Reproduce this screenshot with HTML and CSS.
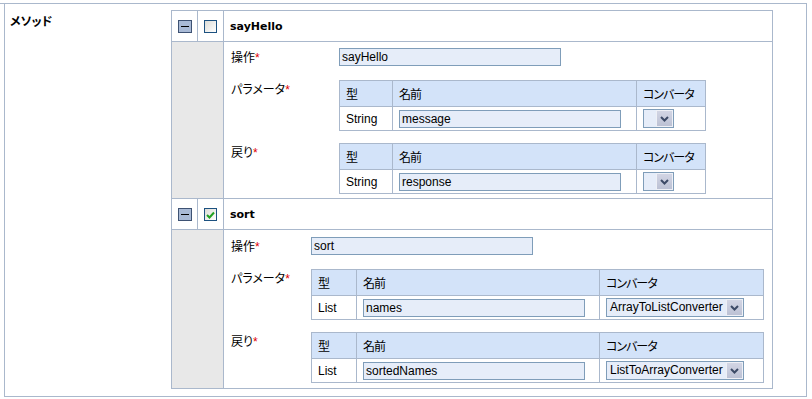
FILE: index.html
```html
<!DOCTYPE html>
<html lang="ja">
<head>
    <meta charset="UTF-8">
    <title>メソッド</title>
    <link rel="stylesheet" href="styles.css">
</head>
<body>
    <div class="page">
        <div class="form-box">
            <div class="form-label">メソッド</div>
            <div class="form-field">
                <table class="methods">
                    <tr class="method-head">
                        <td class="tool"><span class="collapse"></span></td>
                        <td class="tool"><span class="check"></span></td>
                        <td class="method-name">sayHello</td>
                    </tr>
                    <tr>
                        <td class="gutter" colspan="2"></td>
                        <td class="method-body">
                            <div class="fields fields-wide">
                                <div class="field-label">操作<span class="req">*</span></div>
                                <span class="input op-input">sayHello</span>

                                <div class="field-label">パラメータ<span class="req">*</span></div>
                                <table class="params">
                                    <tr>
                                        <th class="c-type">型</th>
                                        <th class="c-name">名前</th>
                                        <th class="c-conv">コンバータ</th>
                                    </tr>
                                    <tr>
                                        <td>String</td>
                                        <td><span class="input">message</span></td>
                                        <td>
                                            <span class="select">
                                                <span class="select-value"></span>
                                                <span class="select-btn"><svg width="9" height="6" viewBox="0 0 9 6"><path d="M1 1 L4.5 4.5 L8 1" fill="none" stroke="#3c4a66" stroke-width="2"/></svg></span>
                                            </span>
                                        </td>
                                    </tr>
                                </table>

                                <div class="field-label">戻り<span class="req">*</span></div>
                                <table class="params">
                                    <tr>
                                        <th class="c-type">型</th>
                                        <th class="c-name">名前</th>
                                        <th class="c-conv">コンバータ</th>
                                    </tr>
                                    <tr>
                                        <td>String</td>
                                        <td><span class="input">response</span></td>
                                        <td>
                                            <span class="select">
                                                <span class="select-value"></span>
                                                <span class="select-btn"><svg width="9" height="6" viewBox="0 0 9 6"><path d="M1 1 L4.5 4.5 L8 1" fill="none" stroke="#3c4a66" stroke-width="2"/></svg></span>
                                            </span>
                                        </td>
                                    </tr>
                                </table>
                            </div>
                        </td>
                    </tr>
                    <tr class="method-head">
                        <td class="tool"><span class="collapse"></span></td>
                        <td class="tool"><span class="check checked"><svg width="9" height="8" viewBox="0 0 9 8"><path d="M1 4 L3.5 6.5 L8 1.5" fill="none" stroke="#21a121" stroke-width="2"/></svg></span></td>
                        <td class="method-name">sort</td>
                    </tr>
                    <tr>
                        <td class="gutter" colspan="2"></td>
                        <td class="method-body">
                            <div class="fields fields-narrow">
                                <div class="field-label">操作<span class="req">*</span></div>
                                <span class="input op-input">sort</span>

                                <div class="field-label">パラメータ<span class="req">*</span></div>
                                <table class="params">
                                    <tr>
                                        <th class="c-type">型</th>
                                        <th class="c-name">名前</th>
                                        <th class="c-conv">コンバータ</th>
                                    </tr>
                                    <tr>
                                        <td>List</td>
                                        <td><span class="input">names</span></td>
                                        <td>
                                            <span class="select">
                                                <span class="select-value">ArrayToListConverter</span>
                                                <span class="select-btn"><svg width="9" height="6" viewBox="0 0 9 6"><path d="M1 1 L4.5 4.5 L8 1" fill="none" stroke="#3c4a66" stroke-width="2"/></svg></span>
                                            </span>
                                        </td>
                                    </tr>
                                </table>

                                <div class="field-label">戻り<span class="req">*</span></div>
                                <table class="params">
                                    <tr>
                                        <th class="c-type">型</th>
                                        <th class="c-name">名前</th>
                                        <th class="c-conv">コンバータ</th>
                                    </tr>
                                    <tr>
                                        <td>List</td>
                                        <td><span class="input">sortedNames</span></td>
                                        <td>
                                            <span class="select">
                                                <span class="select-value">ListToArrayConverter</span>
                                                <span class="select-btn"><svg width="9" height="6" viewBox="0 0 9 6"><path d="M1 1 L4.5 4.5 L8 1" fill="none" stroke="#3c4a66" stroke-width="2"/></svg></span>
                                            </span>
                                        </td>
                                    </tr>
                                </table>
                            </div>
                        </td>
                    </tr>
                </table>
            </div>
        </div>
    </div>
</body>
</html>
```

FILE: styles.css
```css
body {
    margin: 0;
    background: #fff;
    color: #000;
    font-family: "Liberation Sans", "Noto Sans CJK JP", sans-serif;
    font-size: 12px;
}
.page {
    margin-top: 3px;
    width: 807px;
    border-top: 1px solid #aab8cc;
}
.form-box {
    display: flex;
    margin-left: 4px;
    padding-bottom: 7px;
    border: 1px solid #aab8cc;
    border-top: 0;
}
.form-label {
    width: 161px;
    padding: 9px 0 0 5px;
    font-family: "Noto Sans CJK JP", sans-serif;
    font-weight: bold;
    line-height: 16px;
    font-feature-settings: "palt";
}
.form-field {
    padding-top: 6px;
}

/* method list */
.methods {
    border-collapse: collapse;
    width: 602px;
}
.methods > tbody > tr > td {
    border: 1px solid #aab8cc;
    padding: 0;
}
.methods .tool {
    width: 25px;
    text-align: center;
    vertical-align: middle;
}
.method-head > td {
    height: 30px;
}
.methods .method-name {
    padding-left: 6px;
    font-family: "DejaVu Sans", sans-serif;
    font-size: 11px;
    font-weight: bold;
}
.gutter {
    background: #e8e8e8;
}
.methods .method-body {
    padding: 6px 7px 4px;
    vertical-align: top;
}
.collapse {
    display: inline-block;
    position: relative;
    width: 12px;
    height: 11px;
    border: 1px solid #3e5273;
    background: #a9bad6;
    vertical-align: middle;
}
.collapse::after {
    content: "";
    position: absolute;
    left: 2px;
    right: 2px;
    top: 5px;
    height: 1px;
    background: #000;
}
.check {
    display: inline-flex;
    align-items: center;
    justify-content: center;
    width: 11px;
    height: 11px;
    border: 1px solid #1c5180;
    background: linear-gradient(135deg, #dcdcd7, #fff);
    vertical-align: middle;
}

/* fields */
.fields {
    display: grid;
    grid-template-columns: 108px auto;
    row-gap: 12px;
    align-items: start;
    justify-items: start;
}
.fields-narrow {
    grid-template-columns: 80px auto;
    padding: 1px 0;
}
.field-label {
    font-family: "Noto Sans CJK JP", sans-serif;
    line-height: 17px;
    font-feature-settings: "palt";
}
.req {
    color: #e00000;
    font-family: "Liberation Sans", sans-serif;
}
.input {
    display: inline-block;
    box-sizing: border-box;
    width: 222px;
    height: 18px;
    padding: 0 2px;
    border: 1px solid #7f9db9;
    background: #e6edf9;
    line-height: 16px;
    vertical-align: middle;
}
.op-input {
    display: block;
    margin-bottom: 2px;
}

/* parameter tables */
.params {
    border-collapse: collapse;
}
.params th,
.params td {
    border: 1px solid #aab8cc;
    padding: 0 6px;
    text-align: left;
    white-space: nowrap;
}
.params th {
    height: 25px;
    background: #d3e3f9;
    font-family: "Noto Sans CJK JP", sans-serif;
    font-weight: normal;
    font-feature-settings: "palt";
    letter-spacing: -1px;
}
.params td {
    height: 23px;
}
.fields-wide .c-type { width: 40px; }
.fields-wide .c-name { width: 231px; }
.fields-wide .c-conv { width: 56px; }
.fields-narrow .c-type { width: 32px; }
.fields-narrow .c-name { width: 230px; }
.fields-narrow .c-conv { width: 151px; }

.select {
    display: inline-flex;
    height: 19px;
    box-sizing: border-box;
    border: 1px solid #7f9db9;
    background: #e6edf9;
    vertical-align: middle;
}
.select-value {
    min-width: 6px;
    padding: 0 3px;
    line-height: 17px;
}
.select-btn {
    display: flex;
    align-items: center;
    justify-content: center;
    width: 15px;
    border: 1px solid #eef0f6;
    background: linear-gradient(#d2d5e4, #bcc1d4);
}
```
